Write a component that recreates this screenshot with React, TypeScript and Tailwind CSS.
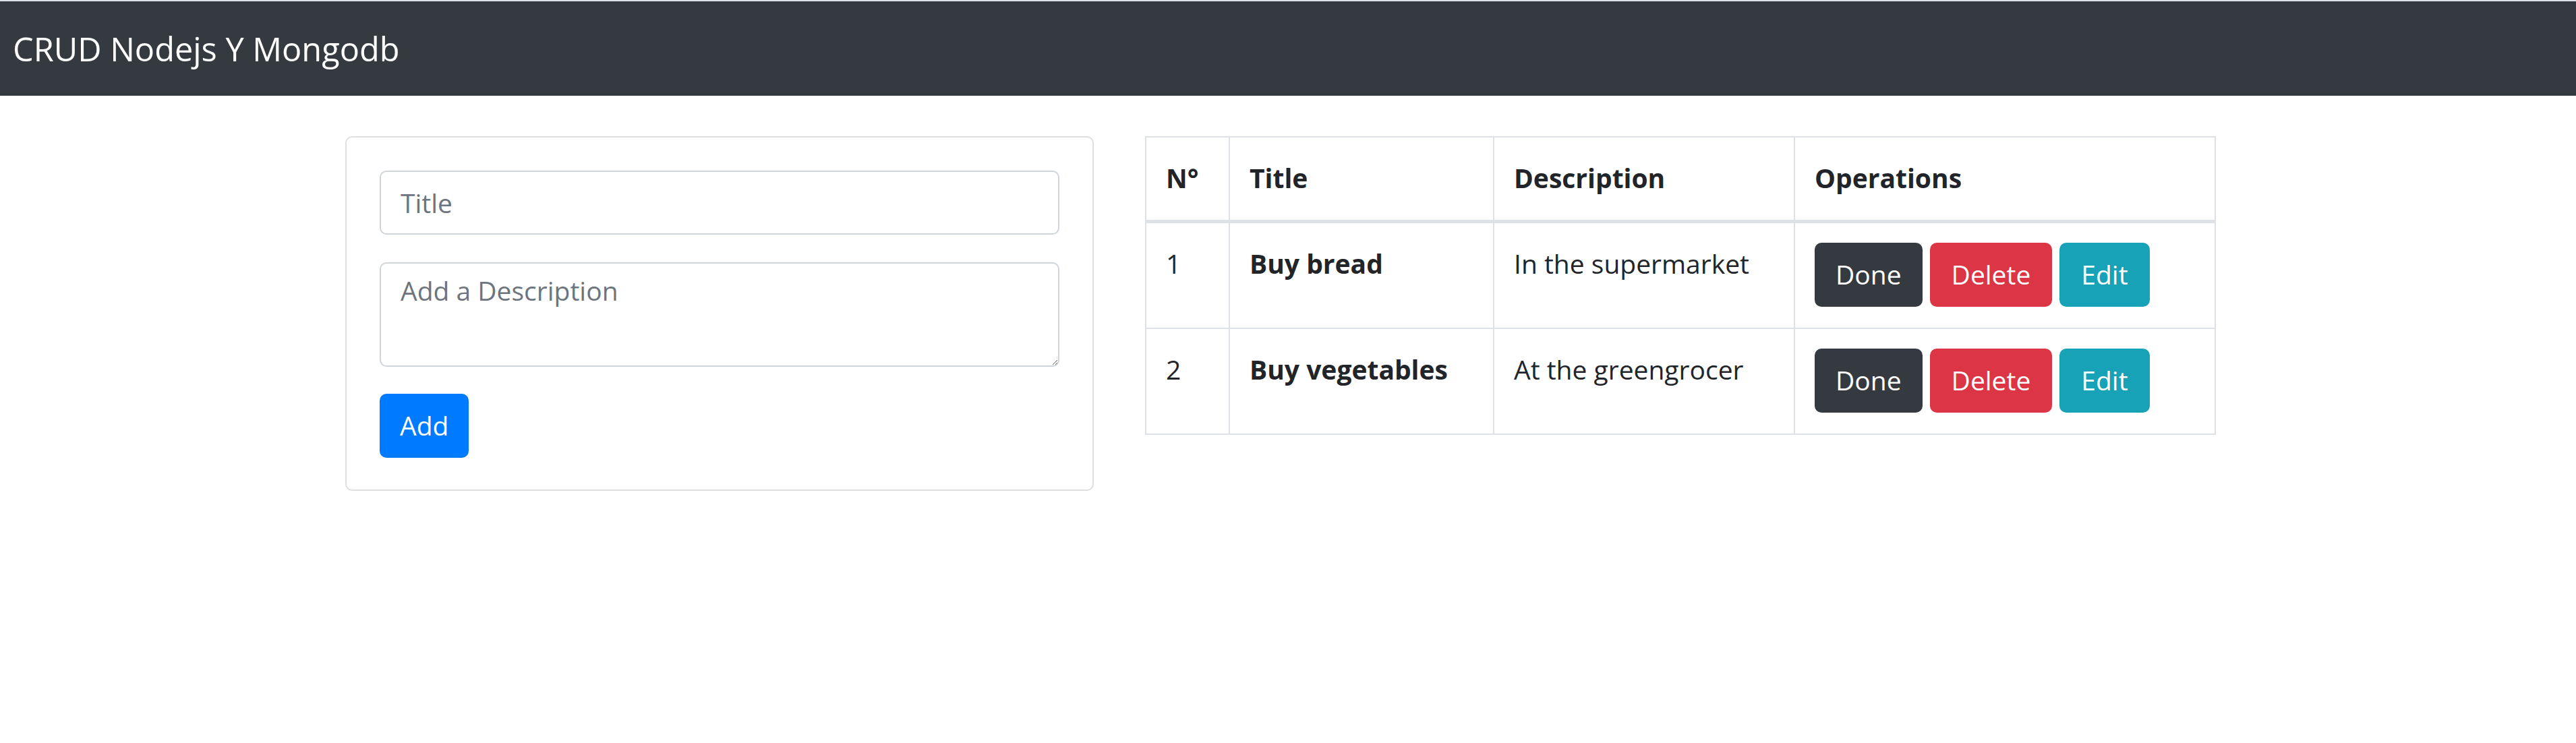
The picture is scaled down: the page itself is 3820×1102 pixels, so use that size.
const tasks = [
  { n: 1, title: "Buy bread", description: "In the supermarket" },
  { n: 2, title: "Buy vegetables", description: "At the greengrocer" },
];

function Btn({ label, color, px }: { label: string; color: string; px: string }) {
  return (
    <button
      type="button"
      className={`h-[95px] rounded-[10px] text-white text-[39px] leading-[58.5px] ${px} ${color}`}
    >
      {label}
    </button>
  );
}

export default function App() {
  return (
    <div className="min-h-[1102px] bg-white font-['Open_Sans',sans-serif] text-[39px] leading-[58.5px] text-[#212529]">
      {/* Navbar */}
      <nav className="flex h-[142px] items-center border-t-2 border-[#dee2e6] bg-[#343a40] pl-[19px]">
        <span className="text-[48.7px] leading-[73px] text-white">CRUD Nodejs Y Mongodb</span>
      </nav>

      <main className="flex items-start gap-[76px] pl-[512px] pt-[60px]">
        {/* Form card */}
        <div className="w-[1110px] rounded-[10px] border-[2px] border-[#dfdfdf] px-[49px] pt-[49px] pb-[47px]">
          <form onSubmit={(e) => e.preventDefault()}>
            <input
              type="text"
              placeholder="Title"
              className="block h-[95px] w-full rounded-[10px] border-[2px] border-[#ced4da] px-[29px] text-[39px] outline-none placeholder:text-[#6c757d]"
            />
            <textarea
              placeholder="Add a Description"
              className="mt-[41px] block h-[155px] w-full rounded-[10px] border-[2px] border-[#ced4da] px-[29px] pt-[11px] pb-[9px] text-[39px] leading-[58.5px] outline-none placeholder:text-[#6c757d]"
            />
            <button
              type="submit"
              className="mt-[40px] h-[95px] rounded-[10px] bg-[#007bff] px-[30px] text-[39px] text-white"
            >
              Add
            </button>
          </form>
        </div>

        {/* Tasks table */}
        <table className="w-[1588px] table-fixed border-collapse border-[2px] border-[#dee2e6]">
          <colgroup>
            <col className="w-[124px]" />
            <col className="w-[392px]" />
            <col className="w-[446px]" />
            <col />
          </colgroup>
          <thead>
            <tr>
              <th className="border-[2px] border-b-[5px] border-[#dee2e6] px-[29px] pt-[31px] pb-[32px] text-left font-bold">N°</th>
              <th className="border-[2px] border-b-[5px] border-[#dee2e6] px-[29px] pt-[31px] pb-[32px] text-left font-bold">Title</th>
              <th className="border-[2px] border-b-[5px] border-[#dee2e6] px-[29px] pt-[31px] pb-[32px] text-left font-bold">Description</th>
              <th className="border-[2px] border-b-[5px] border-[#dee2e6] px-[29px] pt-[31px] pb-[32px] text-left font-bold">Operations</th>
            </tr>
          </thead>
          <tbody>
            {tasks.map((t) => (
              <tr key={t.n}>
                <td className="border-[2px] border-[#dee2e6] p-[29px] pt-[31px] align-top">{t.n}</td>
                <td className="border-[2px] border-[#dee2e6] p-[29px] pt-[31px] align-top font-bold">{t.title}</td>
                <td className="border-[2px] border-[#dee2e6] p-[29px] pt-[31px] align-top">{t.description}</td>
                <td className="border-[2px] border-[#dee2e6] px-[29px] pt-[29px] pb-[31px] align-top">
                  <div className="flex gap-[11px]">
                    <Btn label="Done" color="bg-[#343a40]" px="px-[31px]" />
                    <Btn label="Delete" color="bg-[#dc3545]" px="px-[32px]" />
                    <Btn label="Edit" color="bg-[#17a2b8]" px="px-[32px]" />
                  </div>
                </td>
              </tr>
            ))}
          </tbody>
        </table>
      </main>
    </div>
  );
}
